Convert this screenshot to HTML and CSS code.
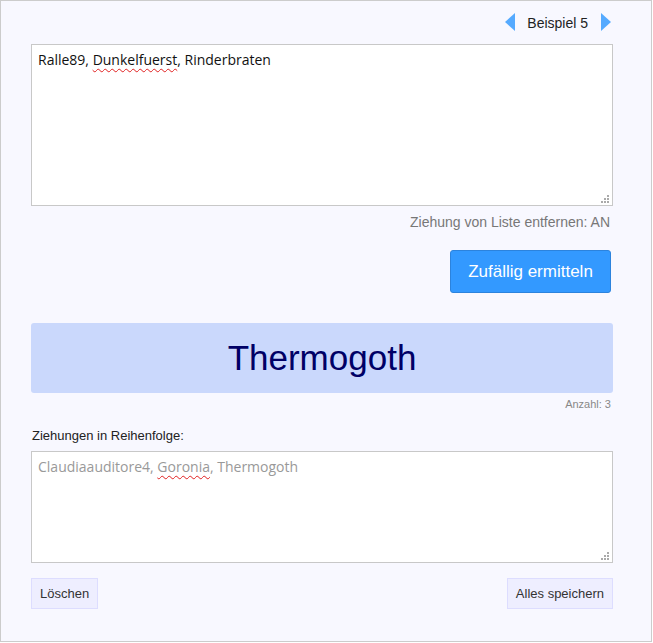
FILE: index.html
```html
<!DOCTYPE html>
<html lang="de">

<head>
    <meta charset="UTF-8">
    <meta name="viewport" content="width=device-width, initial-scale=1.0">
    <title>Zufallsgenerator</title>
    <link rel="stylesheet" href="styles.css">
</head>

<body>
    <div class="panel">
        <div class="nav">
            <span class="arrow arrow-left"></span>
            <span class="nav-label">Beispiel 5</span>
            <span class="arrow arrow-right"></span>
        </div>

        <div class="textbox names" contenteditable="true">Ralle89, <span class="typo">Dunkelfuerst</span>, Rinderbraten</div>

        <div class="option">Ziehung von Liste entfernen: AN</div>

        <div class="actions">
            <button type="button" class="draw">Zufällig ermitteln</button>
        </div>

        <div class="result">Thermogoth</div>
        <div class="count">Anzahl: 3</div>

        <label class="history-label">Ziehungen in Reihenfolge:</label>
        <div class="textbox history">Claudiaauditore4, <span class="typo">Goronia</span>, Thermogoth</div>

        <div class="footer">
            <button type="button" class="small">Löschen</button>
            <button type="button" class="small">Alles speichern</button>
        </div>
    </div>
</body>

</html>
```

FILE: styles.css
```css
body {
    margin: 0;
    font-family: "Liberation Sans", Arial, sans-serif;
}

.panel {
    width: 652px;
    height: 642px;
    box-sizing: border-box;
    padding: 0 38px 0 30px;
    border: 1px solid #ccc;
    background-color: #f8f8ff;
    display: flex;
    flex-direction: column;
}

.nav {
    display: flex;
    justify-content: flex-end;
    align-items: center;
    gap: 12px;
    height: 20px;
    margin-top: 11px;
    margin-right: 2px;
    font-size: 14px;
    color: #222;
}

.nav-label {
    margin-top: 1px;
    margin-right: 1px;
}

.arrow {
    width: 0;
    height: 0;
    border-top: 9px solid transparent;
    border-bottom: 9px solid transparent;
    cursor: pointer;
}

.arrow-left {
    border-right: 10px solid #55aaff;
}

.arrow-right {
    border-left: 10px solid #55aaff;
}

.textbox {
    position: relative;
    box-sizing: border-box;
    padding: 5px 6px;
    border: 1px solid #c8c8c8;
    background-color: #fff;
    font-family: "Open Sans", sans-serif;
    font-size: 14px;
    line-height: 19px;
    overflow: hidden;
    outline: none;
}

/* resize grip, dotted like the browser draws it */
.textbox::after {
    content: "";
    position: absolute;
    right: 9px;
    bottom: 2px;
    width: 2px;
    height: 2px;
    background: #aaa;
    box-shadow: 3px 0 0 #aaa, 6px 0 0 #aaa, 3px -3px 0 #aaa, 6px -3px 0 #aaa, 6px -6px 0 #aaa;
}

.names {
    height: 162px;
    margin-top: 12px;
    color: #111;
}

.history {
    height: 112px;
    margin-top: 8px;
    color: #999;
}

.typo {
    text-decoration: underline wavy #e02020;
    text-decoration-thickness: 1px;
    text-underline-offset: 3px;
}

.option {
    margin-top: 8px;
    text-align: right;
    font-size: 14px;
    color: #777;
    padding-right: 3px;
}

.actions {
    display: flex;
    justify-content: flex-end;
    margin-top: 20px;
    padding-right: 2px;
}

.draw {
    width: 161px;
    height: 43px;
    border: 1px solid #2c83dd;
    border-radius: 3px;
    background-color: #3399ff;
    color: #fff;
    font-family: inherit;
    font-size: 17px;
    cursor: pointer;
}

.result {
    height: 70px;
    margin-top: 30px;
    border-radius: 3px;
    background-color: #cad8fc;
    color: #000066;
    font-size: 35px;
    line-height: 70px;
    text-align: center;
}

.count {
    margin-top: 5px;
    text-align: right;
    font-size: 11px;
    color: #888;
    padding-right: 2px;
}

.history-label {
    display: block;
    margin-top: 18px;
    font-size: 13px;
    color: #222;
    padding-left: 1px;
}

.footer {
    display: flex;
    justify-content: space-between;
    margin-top: 15px;
}

.small {
    height: 31px;
    padding: 0 8px;
    border: 1px solid #ddddff;
    background-color: #eeeeff;
    color: #333;
    font-family: inherit;
    font-size: 13px;
    cursor: pointer;
}
```
